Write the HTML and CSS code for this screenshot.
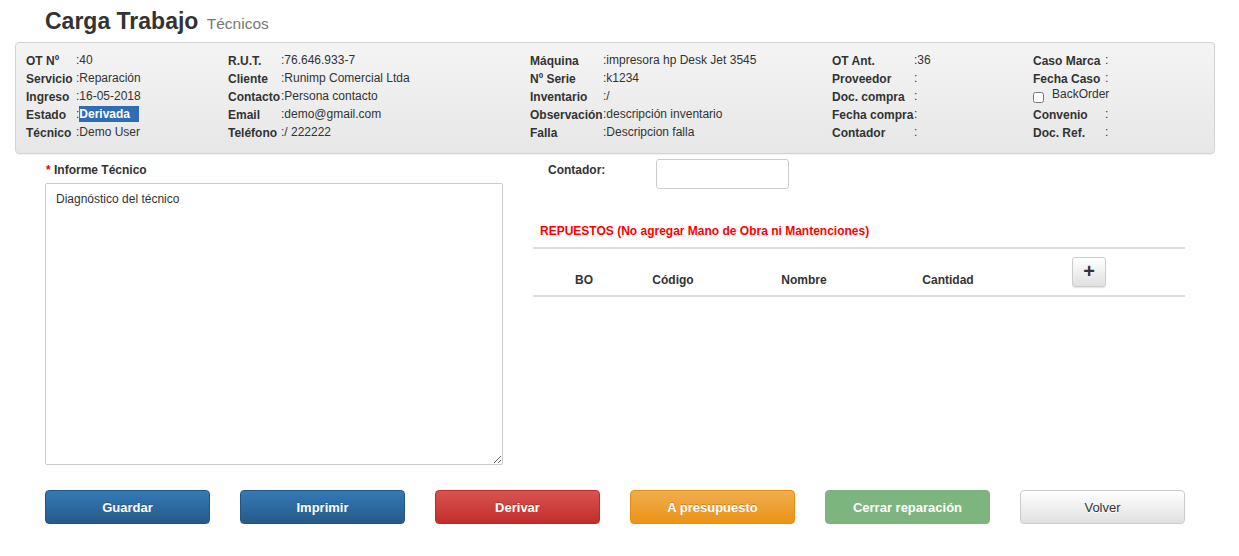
FILE: index.html
```html
<!DOCTYPE html>
<html lang="es">
<head>
    <meta charset="UTF-8">
    <title>Carga Trabajo</title>
    <link rel="stylesheet" href="styles.css">
</head>
<body>
    <div class="page-header">
        <h1>Carga Trabajo <small>Técnicos</small></h1>
    </div>

    <div class="info-panel">
        <table class="info col-a">
            <tr><th>OT Nº</th><td>:40</td></tr>
            <tr><th>Servicio</th><td>:Reparación</td></tr>
            <tr><th>Ingreso</th><td>:16-05-2018</td></tr>
            <tr><th>Estado</th><td>:<span class="estado">Derivada</span></td></tr>
            <tr><th>Técnico</th><td>:Demo User</td></tr>
        </table>
        <table class="info col-b">
            <tr><th>R.U.T.</th><td>:76.646.933-7</td></tr>
            <tr><th>Cliente</th><td>:Runimp Comercial Ltda</td></tr>
            <tr><th>Contacto</th><td>:Persona contacto</td></tr>
            <tr><th>Email</th><td>:demo@gmail.com</td></tr>
            <tr><th>Teléfono</th><td>:/ 222222</td></tr>
        </table>
        <table class="info col-c">
            <tr><th>Máquina</th><td>:impresora hp Desk Jet 3545</td></tr>
            <tr><th>Nº Serie</th><td>:k1234</td></tr>
            <tr><th>Inventario</th><td>:/</td></tr>
            <tr><th>Observación</th><td>:descripción inventario</td></tr>
            <tr><th>Falla</th><td>:Descripcion falla</td></tr>
        </table>
        <table class="info col-d">
            <tr><th>OT Ant.</th><td>:36</td></tr>
            <tr><th>Proveedor</th><td>:</td></tr>
            <tr><th>Doc. compra</th><td>:</td></tr>
            <tr><th>Fecha compra</th><td>:</td></tr>
            <tr><th>Contador</th><td>:</td></tr>
        </table>
        <table class="info col-e">
            <tr><th>Caso Marca</th><td>:</td></tr>
            <tr><th>Fecha Caso</th><td>:</td></tr>
            <tr><td colspan="2" class="check"><input type="checkbox" id="backorder"><label for="backorder">BackOrder</label></td></tr>
            <tr><th>Convenio</th><td>:</td></tr>
            <tr><th>Doc. Ref.</th><td>:</td></tr>
        </table>
    </div>

    <div class="main">
        <div class="left">
            <label class="field-label" for="informe"><span class="req">*</span> Informe Técnico</label>
            <textarea id="informe" placeholder="Diagnóstico del técnico"></textarea>
        </div>
        <div class="right">
            <div class="contador-row">
                <label for="contador">Contador:</label>
                <input type="text" id="contador">
            </div>
            <div class="repuestos-title">REPUESTOS (No agregar Mano de Obra ni Mantenciones)</div>
            <table class="repuestos">
                <thead>
                    <tr>
                        <th class="c-bo">BO</th>
                        <th class="c-cod">Código</th>
                        <th class="c-nom">Nombre</th>
                        <th class="c-cant">Cantidad</th>
                        <th class="c-add"><button type="button" class="btn-add">+</button></th>
                    </tr>
                </thead>
            </table>
        </div>
    </div>

    <div class="actions">
        <button type="button" class="btn btn-blue">Guardar</button>
        <button type="button" class="btn btn-blue">Imprimir</button>
        <button type="button" class="btn btn-red">Derivar</button>
        <button type="button" class="btn btn-orange">A presupuesto</button>
        <button type="button" class="btn btn-green" disabled>Cerrar reparación</button>
        <button type="button" class="btn btn-white">Volver</button>
    </div>
</body>
</html>
```

FILE: styles.css
```css
body {
    font-family: "Liberation Sans", Arial, sans-serif;
    font-size: 12px;
    color: #333;
    background-color: #fff;
    margin: 0;
}
.page-header {
    padding: 6px 45px 0;
    height: 36px;
}
h1 {
    margin: 0;
    font-size: 23px;
    font-weight: bold;
    color: #333;
    line-height: 30px;
}
h1 small {
    font-size: 15.5px;
    font-weight: normal;
    color: #777;
    margin-left: 2px;
}
.info-panel {
    margin: 0 24px 0 15px;
    height: 112px;
    box-sizing: border-box;
    padding: 9px 10px 0;
    border: 1px solid #d3d3d3;
    border-radius: 4px;
    background: linear-gradient(to bottom, #f4f4f4, #e7e7e7);
    box-shadow: 0 1px 1px rgba(0, 0, 0, 0.05);
    display: grid;
    grid-template-columns: 202px 302px 302px 201px 1fr;
    align-items: start;
}
.info {
    border-collapse: collapse;
}
.info th,
.info td {
    padding: 0;
    height: 18px;
    line-height: 18px;
    text-align: left;
    white-space: nowrap;
    vertical-align: top;
}
.info th {
    font-weight: bold;
}
.info td {
    position: relative;
    top: -1px;
}
.col-a th { width: 50px; }
.col-b th { width: 53px; }
.col-c th { width: 73px; }
.col-d th { width: 82px; }
.col-e th { width: 72px; }
.estado {
    display: inline-block;
    width: 60px;
    line-height: 16px;
    background-color: #2e6db3;
    color: #fff;
    font-weight: bold;
}
.check input {
    margin: 0 8px 0 0;
    width: 11px;
    height: 11px;
    vertical-align: -3px;
}
.check label {
    position: relative;
    top: -2px;
}
.main {
    display: flex;
    padding: 0 30px;
    margin-top: 5px;
}
.left {
    width: 488px;
    padding: 0 15px;
    box-sizing: border-box;
}
.field-label {
    display: block;
    font-weight: bold;
    margin: 2px 0 6px 1px;
    padding-top: 2px;
}
.req {
    color: #e00;
}
textarea {
    display: block;
    width: 458px;
    height: 282px;
    box-sizing: border-box;
    border: 1px solid #ccc;
    border-radius: 2px;
    padding: 8px 10px;
    font-family: "Liberation Sans", Arial, sans-serif;
    font-size: 12px;
    color: #333;
}
textarea::placeholder {
    color: #333;
}
.right {
    width: 682px;
    padding: 0 15px;
    box-sizing: border-box;
}
.contador-row {
    display: flex;
    align-items: flex-start;
}
.contador-row label {
    font-weight: bold;
    width: 108px;
    padding-left: 15px;
    margin-top: 4px;
}
.contador-row input {
    width: 133px;
    height: 30px;
    box-sizing: border-box;
    border: 1px solid #ccc;
    border-radius: 3px;
}
.repuestos-title {
    color: #f00;
    font-weight: bold;
    margin: 35px 0 0 7px;
}
.repuestos {
    width: 652px;
    border-collapse: collapse;
    margin-top: 9px;
    border-top: 2px solid #ddd;
    border-bottom: 2px solid #ddd;
}
.repuestos tr {
    height: 48px;
}
.repuestos th {
    padding: 24px 0 0;
    font-weight: bold;
    text-align: center;
    vertical-align: top;
    line-height: 14px;
}
.repuestos th.c-bo { width: 102px; }
.repuestos th.c-cod { width: 76px; }
.repuestos th.c-nom { width: 186px; }
.repuestos th.c-cant { width: 102px; }
.repuestos th.c-add { padding: 8px 6px 0 0; }
.btn-add {
    display: block;
    margin: 0 auto;
    width: 34px;
    height: 30px;
    border: 1px solid #ccc;
    border-radius: 3px;
    background: linear-gradient(to bottom, #fff, #e0e0e0);
    font-family: "Liberation Sans", Arial, sans-serif;
    font-size: 20px;
    font-weight: bold;
    line-height: 20px;
    color: #333;
    padding: 0 0 3px;
    box-shadow: 0 1px 1px rgba(0, 0, 0, 0.1);
}
.actions {
    display: grid;
    grid-template-columns: repeat(6, 165px);
    column-gap: 30px;
    padding: 0 45px;
    margin-top: 25px;
}
.btn {
    height: 34px;
    border-radius: 4px;
    border: 1px solid transparent;
    font-family: "Liberation Sans", Arial, sans-serif;
    font-size: 13px;
    font-weight: bold;
    color: #fff;
    text-shadow: 0 -1px 0 rgba(0, 0, 0, 0.2);
    cursor: pointer;
}
.btn-blue {
    background: linear-gradient(to bottom, #337ab7, #265a88);
    border-color: #245580;
}
.btn-red {
    background: linear-gradient(to bottom, #d9534f, #c12e2a);
    border-color: #b92c28;
}
.btn-orange {
    background: linear-gradient(to bottom, #f0ad4e, #eb9316);
    border-color: #e38d13;
}
.btn-green {
    background-color: #7eb57e;
    border-color: #7eb57e;
    text-shadow: none;
    cursor: default;
}
.btn-white {
    background: linear-gradient(to bottom, #fff, #e0e0e0);
    border-color: #ccc;
    color: #333;
    font-weight: normal;
    text-shadow: 0 1px 0 #fff;
}
```
